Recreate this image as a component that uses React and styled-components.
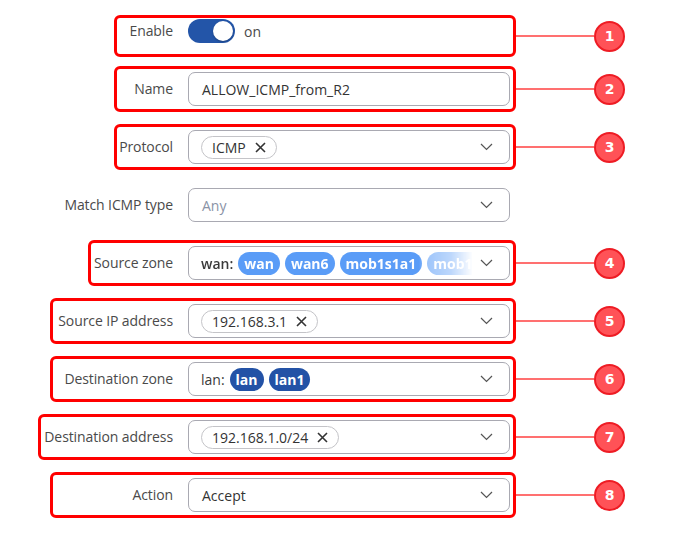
import React from 'react';
import styled, { createGlobalStyle } from 'styled-components';

const GlobalStyle = createGlobalStyle`
  body {
    margin: 0;
    background: #fff;
    font-family: "Open Sans", "Noto Sans", sans-serif;
  }
`;

const Form = styled.div`
  width: 693px;
  padding-top: 15px;
  display: flex;
  flex-direction: column;
  gap: 12px;
`;

const Row = styled.div`
  display: grid;
  grid-template-columns: 516px auto;
  align-items: center;
  margin-bottom: ${p => (p.$compact ? '-3px' : '0')};
`;

const Field = styled.div`
  justify-self: end;
  box-sizing: border-box;
  width: ${p => p.$w}px;
  height: ${p => (p.$compact ? 42 : 46)}px;
  display: flex;
  justify-content: flex-end;
  align-items: ${p => (p.$compact ? 'flex-start' : 'center')};
  padding: ${p => (p.$compact ? '1px 3px 0 3px' : '3px')};
  border: 3px solid ${p => (p.$marked ? '#ff0000' : 'transparent')};
  border-radius: 6px;
`;

const Label = styled.div`
  font-size: 14px;
  color: #4a4a4a;
  text-align: right;
  white-space: nowrap;
  margin-right: 15px;
  line-height: 24px;
  letter-spacing: -0.1px;
`;

const Control = styled.div`
  flex-shrink: 0;
  box-sizing: border-box;
  width: 322px;
  height: 34px;
  border: 1px solid #a9a9b2;
  border-radius: 7px;
  display: flex;
  align-items: center;
  padding: 0 16px 0 12px;
  gap: 8px;
  font-size: 14px;
  color: ${p => (p.$placeholder ? '#8a93a6' : '#333')};
`;

const Value = styled.span`
  flex: 1;
  padding-left: 1px;
  white-space: nowrap;
`;

const SwitchWrap = styled.div`
  flex-shrink: 0;
  width: 322px;
  display: flex;
  align-items: center;
  gap: 9px;
  font-size: 14px;
  color: #4a4a4a;
`;

const Track = styled.div`
  width: 47px;
  height: 24px;
  border-radius: 12px;
  background: #2355a8;
  display: flex;
  align-items: center;
  justify-content: flex-end;
  padding: 2px;
  box-sizing: border-box;
`;

const Knob = styled.div`
  width: 20px;
  height: 20px;
  border-radius: 50%;
  background: #fff;
  box-shadow: 0 1px 2px rgba(0, 0, 0, 0.25);
`;

const Tags = styled.div`
  flex: 1;
  display: flex;
  align-items: center;
  gap: 5px;
  overflow: hidden;
  white-space: nowrap;
  mask-image: ${p =>
    p.$fade
      ? 'linear-gradient(to right, #000 218px, rgba(0,0,0,0.6) 224px, rgba(0,0,0,0.4) 250px, transparent 272px)'
      : 'none'};
`;

const Chip = styled.span`
  display: inline-flex;
  align-items: center;
  gap: 9px;
  height: 23px;
  box-sizing: border-box;
  padding: 0 10px 0 10px;
  border: 1px solid #c4c4c8;
  border-radius: 12px;
  font-size: 14px;
  color: #333;
  flex-shrink: 0;
`;

const ZoneName = styled.span`
  font-weight: ${p => (p.$bold ? 600 : 500)};
  color: #3a3a3a;
  flex-shrink: 0;
`;

const Pill = styled.span`
  display: inline-flex;
  align-items: center;
  height: 23px;
  padding: 0 6px;
  border-radius: 12px;
  background: ${p => (p.$dark ? '#2352a6' : '#5a9cf7')};
  color: #fff;
  font-weight: 700;
  font-size: 14px;
  flex-shrink: 0;
`;

const Connector = styled.div`
  display: flex;
  align-items: center;
`;

const Line = styled.div`
  width: 78px;
  height: 2px;
  background: #ff7070;
`;

const Badge = styled.div`
  width: 31px;
  height: 31px;
  box-sizing: border-box;
  border-radius: 50%;
  background: #ff5257;
  border: 2px solid #ee1c24;
  color: #fff;
  font-family: "DejaVu Sans", sans-serif;
  font-weight: 700;
  font-size: 14px;
  display: flex;
  align-items: center;
  justify-content: center;
`;

const Cross = () => (
  <svg width="11" height="11" viewBox="0 0 11 11">
    <path d="M1 1 L10 10 M10 1 L1 10" stroke="#333" strokeWidth="1.6" fill="none" />
  </svg>
);

const Chevron = () => (
  <svg width="13" height="8" viewBox="0 0 13 8" style={{ flexShrink: 0 }}>
    <path d="M1 1 L6.5 6.5 L12 1" stroke="#555" strokeWidth="1.2" fill="none" />
  </svg>
);

const Marker = ({ n }) => (
  <Connector>
    <Line />
    <Badge>{n}</Badge>
  </Connector>
);

const FormRow = ({ label, w, n, compact, children }) => (
  <Row $compact={compact}>
    <Field $w={w} $marked={!!n} $compact={compact}>
      <Label>{label}</Label>
      {children}
    </Field>
    {n ? <Marker n={n} /> : <div />}
  </Row>
);

export default function App() {
  return (
    <>
      <GlobalStyle />
      <Form>
        <FormRow label="Enable" w={402} n={1} compact>
          <SwitchWrap>
            <Track>
              <Knob />
            </Track>
            on
          </SwitchWrap>
        </FormRow>

        <FormRow label="Name" w={402} n={2}>
          <Control>
            <Value>ALLOW_ICMP_from_R2</Value>
          </Control>
        </FormRow>

        <FormRow label="Protocol" w={402} n={3}>
          <Control>
            <Tags>
              <Chip>ICMP <Cross /></Chip>
            </Tags>
            <Chevron />
          </Control>
        </FormRow>

        <FormRow label="Match ICMP type" w={466}>
          <Control $placeholder>
            <Value>Any</Value>
            <Chevron />
          </Control>
        </FormRow>

        <FormRow label="Source zone" w={428} n={4}>
          <Control>
            <Tags $fade>
              <ZoneName $bold>wan:</ZoneName>
              <Pill>wan</Pill>
              <Pill>wan6</Pill>
              <Pill>mob1s1a1</Pill>
              <Pill>mob1s1a2</Pill>
            </Tags>
            <Chevron />
          </Control>
        </FormRow>

        <FormRow label="Source IP address" w={466} n={5}>
          <Control>
            <Tags>
              <Chip>192.168.3.1 <Cross /></Chip>
            </Tags>
            <Chevron />
          </Control>
        </FormRow>

        <FormRow label="Destination zone" w={466} n={6}>
          <Control>
            <Tags>
              <ZoneName>lan:</ZoneName>
              <Pill $dark>lan</Pill>
              <Pill $dark>lan1</Pill>
            </Tags>
            <Chevron />
          </Control>
        </FormRow>

        <FormRow label="Destination address" w={478} n={7}>
          <Control>
            <Tags>
              <Chip>192.168.1.0/24 <Cross /></Chip>
            </Tags>
            <Chevron />
          </Control>
        </FormRow>

        <FormRow label="Action" w={466} n={8}>
          <Control>
            <Value>Accept</Value>
            <Chevron />
          </Control>
        </FormRow>
      </Form>
    </>
  );
}
